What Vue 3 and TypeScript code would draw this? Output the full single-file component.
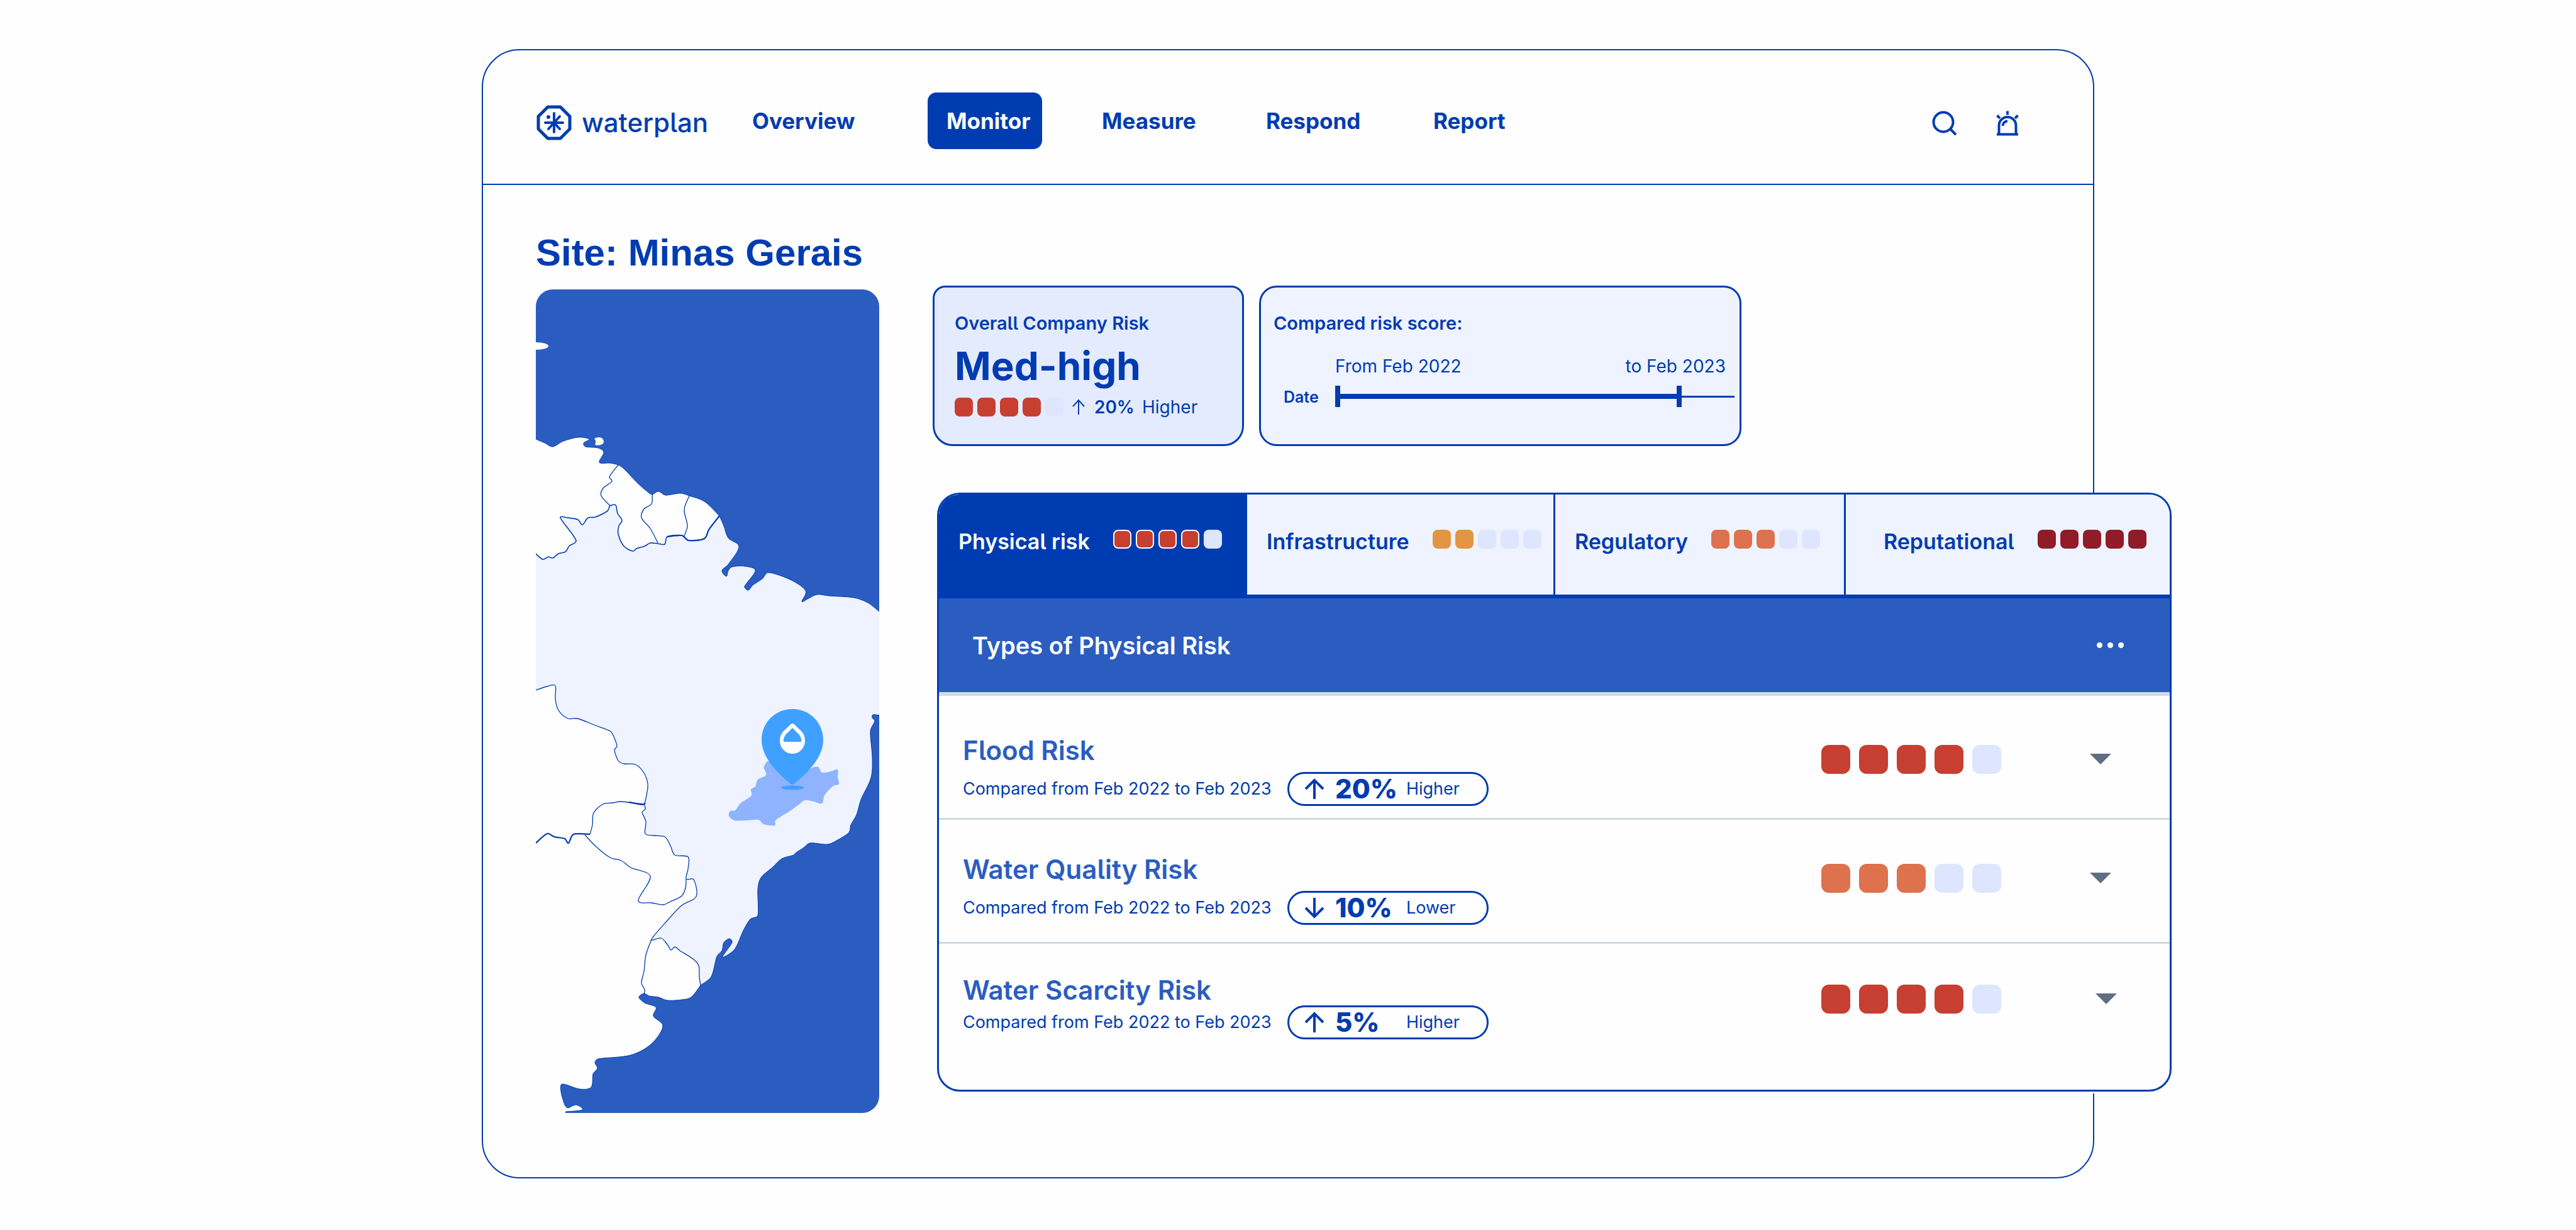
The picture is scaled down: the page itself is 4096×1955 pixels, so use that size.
<script setup lang="ts">
import { ref } from 'vue'

type Point = [number, number]
type Tone = 'red' | 'amber' | 'orange' | 'crimson'

interface Tab { label: string; score: number; tone: Tone }
interface Risk { name: string; slug: string; change: string; up: boolean; word: string; score: number; tone: Tone }

const navItems = ['Overview', 'Monitor', 'Measure', 'Respond', 'Report']
const activeNav = ref('Monitor')

const tabs: Tab[] = [
  { label: 'Physical risk', score: 4, tone: 'red' },
  { label: 'Infrastructure', score: 2, tone: 'amber' },
  { label: 'Regulatory', score: 3, tone: 'orange' },
  { label: 'Reputational', score: 5, tone: 'crimson' },
]
const activeTab = ref('Physical risk')

const risks: Risk[] = [
  { name: 'Flood Risk', slug: 'flood', change: '20%', up: true, word: 'Higher', score: 4, tone: 'red' },
  { name: 'Water Quality Risk', slug: 'quality', change: '10%', up: false, word: 'Lower', score: 3, tone: 'orange' },
  { name: 'Water Scarcity Risk', slug: 'scarcity', change: '5%', up: true, word: 'Higher', score: 4, tone: 'red' },
]

/** Smooth curve through a list of points. */
function curve(points: Point[]): string {
  let d = `M${points[0][0]} ${points[0][1]}`
  for (let i = 0; i < points.length - 1; i++) {
    const a = points[Math.max(i - 1, 0)]
    const b = points[i]
    const c = points[i + 1]
    const e = points[Math.min(i + 2, points.length - 1)]
    const k = Math.min(1 / 6, Math.hypot(c[0] - b[0], c[1] - b[1]) / (Math.hypot(c[0] - a[0], c[1] - a[1]) + 1) / 3)
    const m = Math.min(1 / 6, Math.hypot(c[0] - b[0], c[1] - b[1]) / (Math.hypot(e[0] - b[0], e[1] - b[1]) + 1) / 3)
    d += `C${b[0] + (c[0] - a[0]) * k} ${b[1] + (c[1] - a[1]) * k} ${c[0] - (e[0] - b[0]) * m} ${c[1] - (e[1] - b[1]) * m} ${c[0]} ${c[1]}`
  }
  return d
}
const join = (d: string) => d.replace(/^M/, 'L')

const northCoast: Point[] = [[0, 238], [14, 244], [27, 250], [44, 241], [68, 235], [85, 238], [76, 244], [79, 250], [99, 252], [108, 259], [101, 275], [118, 276], [131, 279], [140, 285], [162, 308], [178, 322], [185, 326], [195, 321], [206, 327], [230, 324], [244, 328], [268, 337], [292, 360]]
const eastCoast: Point[] = [[292, 360], [299, 376], [306, 395], [323, 409], [306, 437], [296, 447], [303, 456], [306, 447], [312, 441], [332, 440], [349, 447], [332, 472], [338, 478], [345, 470], [360, 460], [370, 450], [406, 462], [429, 479], [423, 496], [432, 492], [447, 485], [466, 487], [506, 490], [528, 498], [546, 512]]
const southCoast: Point[] = [[546, 677], [536, 676], [535, 681], [539, 686], [532, 702], [535, 744], [533, 776], [517, 811], [510, 835], [501, 851], [498, 863], [480, 875], [464, 882], [436, 880], [425, 888], [414, 895], [410, 899], [391, 905], [377, 918], [358, 935], [353, 953], [353, 995], [341, 1001], [330, 1019], [316, 1049], [297, 1061], [312, 1038], [308, 1032], [299, 1038], [296, 1051], [288, 1060], [282, 1084], [277, 1095], [262, 1106]]
const plateCoast: Point[] = [[262, 1106], [247, 1125], [232, 1129], [209, 1130], [195, 1125], [180, 1123], [172, 1119], [164, 1125], [173, 1134], [191, 1141], [187, 1155], [202, 1171], [184, 1199], [151, 1217], [99, 1223], [94, 1229], [98, 1238], [91, 1247], [88, 1268], [70, 1271], [42, 1263], [40, 1275], [46, 1296], [51, 1301], [64, 1296], [74, 1304], [47, 1307]]
const northBorder: Point[] = [[292, 360], [275, 382], [268, 396], [243, 399], [232, 391], [209, 393], [205, 405], [194, 404], [182, 403], [173, 408], [160, 412], [154, 416], [140, 408], [131, 389], [132, 376], [137, 367], [130, 356], [127, 343], [118, 344], [114, 352], [94, 362], [83, 363], [74, 374], [67, 366], [51, 363], [39, 363], [64, 399], [53, 408], [47, 417], [36, 420], [27, 427], [20, 425], [11, 429], [0, 420]]
const westBorder: Point[] = [[0, 637], [18, 631], [31, 630], [31, 651], [36, 669], [51, 682], [66, 682], [95, 693], [118, 702], [124, 711], [129, 726], [125, 732], [131, 749], [140, 754], [158, 755], [171, 767], [178, 786], [176, 804], [173, 819], [174, 826], [169, 831], [175, 846], [174, 865], [188, 868], [205, 870], [214, 884], [221, 899], [242, 902], [242, 921], [239, 937], [251, 938], [255, 965], [232, 979], [210, 1002], [184, 1033], [199, 1031], [209, 1041], [215, 1050], [221, 1045], [229, 1051], [251, 1065], [259, 1075], [260, 1093], [262, 1106]]

const thinBorders: Point[][] = [
  [[131, 279], [117, 298], [121, 305], [107, 316], [104, 328], [118, 344]],
  [[185, 326], [184, 341], [172, 349], [168, 363], [182, 380], [194, 403]],
  [[244, 328], [236, 350], [241, 376], [235, 394]],
  [[173, 818], [162, 817], [134, 814], [123, 816], [107, 818], [92, 832], [90, 851], [86, 866]],
  [[78, 867], [95, 885], [118, 903], [136, 908], [151, 919], [182, 933], [163, 971], [184, 975], [203, 978], [214, 973], [232, 964], [238, 951], [239, 937]],
  [[184, 1033], [175, 1058], [172, 1084], [168, 1102], [173, 1113], [172, 1120]],
]
const thickBorders: Point[][] = [
  [[292, 360], [275, 382], [268, 396], [243, 399], [232, 391], [209, 393]],
  [[86, 866], [60, 866], [52, 880], [46, 873], [29, 870], [18, 865], [0, 880]],
  [[174, 816], [170, 819], [158, 817], [148, 815]],
]
const state: Point[] = [[362, 760], [370, 750], [404, 780], [438, 761], [449, 759], [455, 768], [469, 766], [480, 763], [480, 775], [482, 786], [473, 789], [459, 804], [455, 817], [442, 814], [428, 812], [418, 819], [404, 829], [381, 844], [380, 852], [362, 850], [354, 843], [334, 844], [316, 844], [307, 837], [309, 829], [317, 828], [325, 817], [334, 811], [343, 804], [342, 795], [349, 790], [353, 779], [366, 772], [362, 760]]

const brazil = curve(northCoast) + join(curve(eastCoast)) + join(curve(southCoast)) + 'L0 1106Z'
const northLands = curve(northCoast) + join(curve(northBorder)) + 'Z'
const southLands = curve(westBorder) + join(curve(plateCoast)) + 'V1309H0Z'
const coastLines = [northCoast, eastCoast, southCoast, plateCoast].map(curve)
</script>

<template>
  <div class="page">
    <div class="frame">
      <header class="topbar">
        <a class="brand" href="#">
          <svg class="brand-mark" viewBox="0 0 56 56" aria-hidden="true">
            <path d="M18 3H38L53 18V38L38 53H18L3 38V18Z" fill="none" stroke="currentColor" stroke-width="5" stroke-linejoin="round" />
            <path d="M28 13V43M14 28H42M37 18L19 38M28 28L37 38" fill="none" stroke="currentColor" stroke-width="4" stroke-linecap="round" />
            <circle cx="19" cy="19" r="3" fill="currentColor" />
          </svg>
          <span>waterplan</span>
        </a>
        <nav class="nav">
          <a v-for="item in navItems" :key="item" href="#" :class="{ active: item === activeNav }" @click.prevent="activeNav = item">{{ item }}</a>
        </nav>
        <div class="tools">
          <button type="button" aria-label="Search">
            <svg viewBox="0 0 40 40"><circle cx="18" cy="18" r="15.5" /><path d="M29 29L38 38" /></svg>
          </button>
          <button type="button" aria-label="Alerts">
            <svg viewBox="0 0 40 40">
              <path d="M3 37.500H37M6.500 37V23.500a13.500 13.500 0 0 1 27 0V37M12.500 24a7.500 7.500 0 0 1 7.500-7.500M20 0.500V6.500M3.500 7.500L8 12M36.500 7.500L32 12" />
            </svg>
          </button>
        </div>
      </header>

      <main class="content">
        <h1>Site: Minas Gerais</h1>

        <svg class="map" viewBox="0 0 546 1309" role="img" aria-label="Map of the site in South America">
          <path d="M0 0H546V1309H47L36 1290V560H0Z" fill="#2b5dc1" />
          <path :d="brazil" fill="#eef3ff" />
          <path :d="northLands" fill="#fefefe" />
          <path :d="southLands" fill="#fefefe" />
          <ellipse cx="0" cy="90" rx="20" ry="6" fill="#fefefe" />
          <path d="M93 237Q101 233 106 237Q110 243 106 246Q100 249 94 247Q97 241 93 237Z" fill="#fefefe" />
          <g fill="none" stroke="#003cb1">
            <path v-for="(d, i) in coastLines" :key="'c' + i" :d="d" stroke-width="1" />
            <path :d="curve(northBorder)" stroke-width="1.600" />
            <path :d="curve(westBorder)" stroke-width="1.300" />
            <path v-for="(line, i) in thinBorders" :key="'t' + i" :d="curve(line)" stroke-width="1.300" />
            <path v-for="(line, i) in thickBorders" :key="'k' + i" :d="curve(line)" stroke-width="2.200" />
          </g>
          <path :d="curve(state)" fill="#8fb3ff" />
          <ellipse cx="408" cy="792" rx="18" ry="3.500" fill="#40a0ff" />
          <path d="M408 667C436 667 457 689 457 716C457 745 430 770 412 785Q408 789 404 785C386 770 359 745 359 716C359 689 380 667 408 667Z" fill="#40a0ff" />
          <path d="M405.500 691Q408 689 410.500 691L422 702C426 706 428 711 428 717C428 729 419 738 408 738C397 738 388 729 388 717C388 711 390 706 394 702Z" fill="#fff" />
          <path d="M408 697L419 708Q423 713 422 719H394Q393 713 397 708Z" fill="#40a0ff" />
        </svg>

        <div class="details">
          <div class="cards">
            <section class="card overall">
              <h2>Overall Company Risk</h2>
              <p class="level">Med-high</p>
              <div class="trend">
                <span class="meter small red" role="img" aria-label="4 of 5"><i v-for="n in 5" :key="n" :class="{ on: n <= 4 }" /></span>
                <svg class="mini-arrow" viewBox="0 0 20 26" aria-hidden="true"><path d="M10 25V2M1 12L10 2L19 12" /></svg>
                <strong>20%</strong>
                <span>Higher</span>
              </div>
            </section>

            <section class="card compared">
              <h2>Compared risk score:</h2>
              <div class="range">
                <span class="range-label">Date</span>
                <div class="range-body">
                  <div class="range-dates"><span>From Feb 2022</span><span>to Feb 2023</span></div>
                  <div class="track"><i class="stop" /><i class="span" /><i class="stop" /><i class="rest" /></div>
                </div>
              </div>
            </section>
          </div>

          <section class="panel">
            <div class="tabs" role="tablist">
              <button v-for="tab in tabs" :key="tab.label" type="button" role="tab" :aria-selected="tab.label === activeTab" :class="['tab', { selected: tab.label === activeTab }]" @click="activeTab = tab.label">
                <span>{{ tab.label }}</span>
                <span :class="['meter', 'small', tab.tone]"><i v-for="n in 5" :key="n" :class="{ on: n <= tab.score }" /></span>
              </button>
            </div>

            <div class="panel-head">
              <h2>Types of Physical Risk</h2>
              <button type="button" aria-label="More options"><i /><i /><i /></button>
            </div>

            <ul class="risks">
              <li v-for="risk in risks" :key="risk.slug" :class="['risk', risk.slug]">
                <div class="risk-text">
                  <h3>{{ risk.name }}</h3>
                  <div class="compare">
                    <span class="period">Compared from Feb 2022 to Feb 2023</span>
                    <span class="pill">
                      <svg viewBox="0 0 32 34" aria-hidden="true">
                        <path v-if="risk.up" d="M16 33V3M2 17L16 3L30 17" />
                        <path v-else d="M16 1V31M2 17L16 31L30 17" />
                      </svg>
                      <b>{{ risk.change }}</b>
                      <span>{{ risk.word }}</span>
                    </span>
                  </div>
                </div>
                <span :class="['meter', 'large', risk.tone]" role="img" :aria-label="risk.score + ' of 5'"><i v-for="n in 5" :key="n" :class="{ on: n <= risk.score }" /></span>
                <button type="button" class="expand" :aria-label="'Expand ' + risk.name">
                  <svg viewBox="0 0 34 17"><path d="M0 0H34L17 17Z" /></svg>
                </button>
              </li>
            </ul>
          </section>
        </div>
      </main>
    </div>
  </div>
</template>

<style>
body {
  background: #fefefe;
}
</style>

<style scoped>
.page {
  --blue: #003cb1;
  --mid: #2b5dc1;
  --pale: #eef3ff;
  --empty: #dde5ff;
  padding: 78px 0;
  color: var(--blue);
  font-family: Inter, "Liberation Sans", sans-serif;
  font-feature-settings: "cv05";
}
* { box-sizing: border-box; }
h1, h2, h3, p, ul { margin: 0; padding: 0; }
button { font: inherit; font-feature-settings: inherit; color: inherit; background: none; border: 0; padding: 0; cursor: pointer; }
a { color: inherit; text-decoration: none; }

.frame {
  width: 62.6vw;
  margin: 0 auto;
  border: 2px solid var(--blue);
  border-radius: 60px;
}
.topbar {
  display: flex;
  align-items: center;
  height: 214px;
  padding: 0 116px 0 85px;
  border-bottom: 2px solid var(--blue);
}
.brand {
  display: flex;
  align-items: center;
  gap: 16px;
  width: 312px;
  height: 56px;
  margin-top: 18px;
  font-size: 42px;
  line-height: 48px;
  font-weight: 500;
}
.brand-mark { width: 56px; height: 56px; }
.nav {
  display: grid;
  grid-template-columns: 310px 246px 261px 266px 200px;
  margin-top: 12px;
  font-size: 35px;
  line-height: 90px;
  font-weight: 700;
}
.nav a { justify-self: start; margin-left: 31px; }
.nav .active {
  margin-left: 0;
  padding: 0 18px 0 30px;
  border-radius: 14px;
  color: #fefefe;
  background: var(--blue);
}
.tools { display: flex; gap: 60px; margin: 20px 0 0 auto; }
.tools svg { display: block; width: 40px; height: 40px; fill: none; stroke: currentColor; stroke-width: 4; }

.content {
  display: grid;
  grid-template-columns: 546px minmax(0, 1fr);
  column-gap: 85px;
  padding: 72px 0 102px 84px;
}
h1 {
  grid-column: 1 / -1;
  margin-bottom: 16px;
  font: 700 60px/72px "Liberation Sans", Arial, sans-serif;
}
.map { display: block; width: 100%; margin-top: 6px; border-radius: 27px 27px 27px 0; align-self: start; }

.cards { display: grid; grid-template-columns: 495px 767px; gap: 24px; }
.card { height: 255px; border: 3px solid var(--blue); border-radius: 28px; }
.card h2 { font-size: 29px; line-height: 36px; font-weight: 600; }
.overall { padding: 39px 32px; border-radius: 20px 20px 32px 32px; background: #e5ebff; }
.level { margin-top: 14px; font-size: 62px; line-height: 72px; font-weight: 700; }
.trend { display: flex; align-items: center; height: 36px; margin-top: 11px; font-size: 28px; }
.mini-arrow { width: 20px; height: 26px; margin: 0 15px 0 14px; fill: none; stroke: currentColor; stroke-width: 2; }
.trend strong { margin-right: 12px; font-weight: 600; }
.compared { padding: 39px 8px 0 20px; background: var(--pale); }

.range { display: flex; align-items: flex-end; margin-top: 32px; }
.range-label { width: 98px; padding-left: 16px; font-size: 25px; line-height: 32px; font-weight: 600; }
.range-body { flex: 1; }
.range-dates { display: flex; justify-content: space-between; padding-right: 14px; font-size: 28px; line-height: 36px; }
.track { display: flex; align-items: center; margin-top: 13px; }
.stop { width: 8px; height: 34px; background: var(--blue); }
.span { flex: 1; height: 8px; background: var(--blue); }
.rest { width: 84px; height: 3px; background: var(--blue); }

.meter { display: flex; }
.meter i { background: var(--empty); }
.small { gap: 7px; }
.small i { width: 29px; height: 30px; border-radius: 8px; }
.large { gap: 14px; }
.large i { width: 46px; height: 46px; border-radius: 12px; }
.red .on { background: #c63f31; }
.amber .on { background: #e39641; }
.orange .on { background: #de714e; }
.crimson .on { background: #921b28; }

.panel {
  position: relative;
  margin: 74px -125px 0 7px;
  border: 3px solid var(--blue);
  border-radius: 36px;
  overflow: hidden;
  background: #fefefe;
  box-shadow: 0 3px 0 #fefefe;
}
.tabs {
  display: grid;
  grid-template-columns: 490fr 490fr 462fr 515fr;
  border-bottom: 6px solid var(--blue);
}
.tab {
  display: flex;
  align-items: center;
  gap: 37px;
  height: 159px;
  padding: 0 0 10px 31px;
  border-right: 3px solid var(--blue);
  background: var(--pale);
  font-size: 34px;
  font-weight: 600;
}
.tab:last-child { padding-left: 60px; border-right: 0; }
.tab .meter { margin-bottom: 8px; }
.selected { background: var(--blue); color: #fefefe; }
.selected .on { border: 2px solid #fefefe; }
.panel-head {
  display: flex;
  align-items: center;
  justify-content: space-between;
  height: 155px;
  padding: 0 73px 0 53px;
  border-bottom: 6px solid #d0d9e6;
  background: var(--mid);
  color: #fefefe;
}
.panel-head h2 { font-size: 38px; line-height: 48px; font-weight: 600; font-feature-settings: normal; }
.panel-head button { display: flex; gap: 8px; }
.panel-head i { width: 9px; height: 9px; border-radius: 50%; background: #fefefe; }

.risks { list-style: none; }
.risk {
  display: grid;
  grid-template-columns: minmax(0, 1fr) auto auto;
  align-items: start;
  height: 197px;
  padding: 55px 93px 0 38px;
  border-bottom: 3px solid #ced8e3;
}
.flood { padding-top: 63px; }
.risk h3 { color: var(--mid); font-size: 42px; line-height: 48px; font-weight: 600; }
.compare { display: flex; align-items: center; gap: 18px; margin-top: 10px; font-size: 27px; line-height: 36px; }
.period { min-width: 498px; }
.pill {
  display: grid;
  grid-template-columns: 49px 113px auto;
  align-items: center;
  width: 320px;
  height: 54px;
  padding-left: 24px;
  border: 3px solid var(--blue);
  border-radius: 27px;
}
.pill svg { width: 32px; height: 34px; fill: none; stroke: currentColor; stroke-width: 4; }
.pill b { font-size: 42px; font-weight: 800; }
.large { margin: 15px 141px 0 0; }
.expand { margin-top: 29px; }
.expand svg { display: block; width: 34px; height: 17px; fill: #5f6e82; }
.scarcity { height: 232px; padding: 50px 84px 0 38px; border-bottom: 0; }
.scarcity .large { margin-right: 150px; }
.scarcity .compare { margin-top: 0; }
</style>
